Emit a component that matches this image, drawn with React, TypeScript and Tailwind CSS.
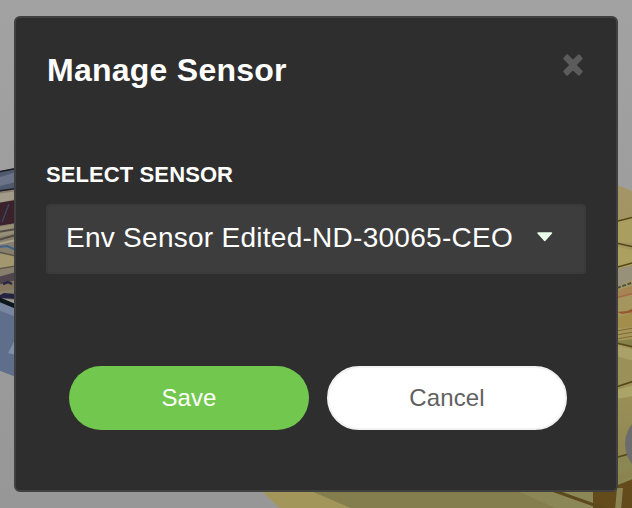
function Backdrop() {
  return (
    <svg className="absolute inset-0 h-full w-full" viewBox="0 0 632 508" aria-hidden="true">
      <defs>
        <linearGradient id="wall" x1="0" y1="0" x2="0" y2="1">
          <stop offset="0" stopColor="#a2a2a2" />
          <stop offset="1" stopColor="#979797" />
        </linearGradient>
        <linearGradient id="sofa" x1="0" y1="0" x2="0" y2="1">
          <stop offset="0" stopColor="#a39566" />
          <stop offset="0.5" stopColor="#a4965a" />
          <stop offset="1" stopColor="#857f4c" />
        </linearGradient>
        <filter id="soft" x="-10%" y="-10%" width="120%" height="120%">
          <feGaussianBlur stdDeviation="0.6" />
        </filter>
      </defs>
      <rect width="632" height="508" fill="url(#wall)" />
      <g filter="url(#soft)">
        <path d="M0 171l16-3v24l-16 2z" fill="#505a6e" />
        <path d="M0 177l16-5v10l-16 4z" fill="#6a7388" />
        <path d="M-2 172l18-3.500" stroke="#1b1b22" strokeWidth="1.500" />
        <path d="M-2 192l18-3v112l-18-4z" fill="#877f6c" />
        <path d="M-2 191l18-2.500" stroke="#20202a" strokeWidth="1.500" />
        <path d="M-2 194l18-3v8l-18 4z" fill="#a29b8a" />
        <path d="M-2 203l18-3v23l-18 3z" fill="#3a2029" />
        <path d="M2 222l7-18" stroke="#3b4660" strokeWidth="1.500" />
        <path d="M-2 227l18-3v9l-18 4z" fill="#979078" />
        <path d="M-2 232l18-3M-2 240l18-5" stroke="#554b45" strokeWidth="2" />
        <path d="M-2 244l18-4" stroke="#a9a18c" strokeWidth="2" />
        <path d="M-2 247l9-1 9 4" stroke="#3e628b" strokeWidth="2" fill="none" />
        <path d="M-2 253l18 2v12l-18 3z" fill="#a3976f" />
        <path d="M-2 252l18 4M-2 269l18-3" stroke="#5d5545" strokeWidth="1.500" />
        <path d="M-2 277l18-5v8l-18 5z" fill="#51454d" />
        <path d="M-2 285l18-4v8l-18 3z" fill="#85775f" />
        <path d="M-2 296l6-3 12 1v5l-18-1z" fill="#272442" />
        <path d="M3 284l5-2 4 2" stroke="#2c2545" strokeWidth="2.500" fill="none" />
        <path d="M-2 302l18 6v69l-18-7z" fill="#5f6e8b" />
        <path d="M-2 301l18 6v10l-18-7z" fill="#7885a0" />
        <path d="M8 353l8-15v17z" fill="#8190a9" />
        <path d="M-2 299l18 7.500" stroke="#11131a" strokeWidth="4.500" />

        <path d="M616 185q8 2 18 7v316h-18z" fill="url(#sofa)" />
        <path d="M616 222l18-5v26l-18-1z" fill="#a99d5e" />
        <path d="M616 246l18 5v15l-18 2z" fill="#aba05f" />
        <path d="M616 221.500l18-4.500M616 243l18 4M616 267.500l18-5" stroke="#574719" strokeWidth="1.600" />
        <path d="M616 269l18-4v14l-18 8z" fill="#98917a" />
        <path d="M617 288l17-6" stroke="#4d5048" strokeWidth="2" strokeDasharray="4 1.500" />
        <path d="M616 291l18-6v9l-18 4z" fill="#a48552" />
        <path d="M616 298l18-5" stroke="#a66a47" strokeWidth="1.500" />
        <path d="M617 312l10-1 7-3v4l-12 2z" fill="#96592f" />
        <path d="M616 318l18-6v15l-18 1z" fill="#a38d4c" />
        <path d="M616 331l18-3M616 335l18-3M616 339l18-3" stroke="#806a2e" strokeWidth="1" />
        <path d="M616 341l18-2v10l-18-6z" fill="#868048" />
        <path d="M616 343l18 4" stroke="#574719" strokeWidth="1.600" />
        <path d="M616 345l18 8v31l-18 9z" fill="#9b9158" />
        <path d="M616 345l18 5v11l-18-5z" fill="#aaa167" />
        <path d="M616 387l18-6" stroke="#574719" strokeWidth="1.800" />
        <path d="M616 390l18-5v11l-18 3z" fill="#aaa468" />
        <path d="M616 457l18-5v17l-18 6z" fill="#8b8752" />
        <path d="M616 457.500l18-5" stroke="#574719" strokeWidth="1.800" />
        <path d="M258 488h376v24H284z" fill="#a3965a" />
        <path d="M304 488h330v24H360z" fill="#847d4e" />
        <path d="M511 488h123v24h-70z" fill="#8c8756" />
        <path d="M593 490l23-7 18-7v36h-41z" fill="#634b1b" />
        <path d="M593 490l-2 22h-4v-22z" fill="#8c8756" />
        <path d="M616 484l18-7" stroke="#8b8752" strokeWidth="3" />
        <path d="M617 488h6l-2 22h-6z" fill="#8b8352" />
        <path d="M552 490l56 20" stroke="#5d491c" strokeWidth="3" />
      </g>
      <circle cx="657" cy="444" r="32" fill="#6c6c6c" />
    </svg>
  );
}

function CloseIcon() {
  return (
    <svg width="22" height="24" viewBox="0 0 22 24" aria-hidden="true">
      <path
        d="M5 2.400L2.400 5.600 8.700 12 2.400 18.400 5 21.600 11 16 17 21.600 19.600 18.400 13.300 12 19.600 5.600 17 2.400 11 8z"
        fill="#5c5c5c"
        stroke="#5c5c5c"
        strokeWidth="2.200"
        strokeLinejoin="round"
      />
    </svg>
  );
}

export default function App() {
  return (
    <main className="relative h-[508px] w-[632px] overflow-hidden font-['Liberation_Sans',Arial,sans-serif]">
      <Backdrop />
      <div className="relative flex h-full pt-4 pl-3.5">
        <section
          role="dialog"
          aria-label="Manage Sensor"
          className="flex h-[476px] w-[604px] flex-col rounded-md border-2 border-[#404040] bg-[#2e2e2e] px-[30px]"
        >
          <header className="mt-[34px] flex h-9 items-start justify-between">
            <h1 className="pl-px text-[32px] leading-9 font-bold tracking-[0.25px] text-white">Manage Sensor</h1>
            <button aria-label="Close" className="mr-0.5 mt-px">
              <CloseIcon />
            </button>
          </header>
          <div className="mt-[75px] flex flex-col">
            <label className="h-6 text-[22px] leading-6 font-bold tracking-[0.1px] text-white">SELECT SENSOR</label>
            <button className="mt-[17px] flex h-[70px] w-[540px] items-center rounded border-2 border-[#3a3a3a] bg-[#3d3d3d] pb-0.5 pl-[18px] text-left">
              <span className="w-[448px] text-[28px] leading-8 tracking-[0.27px] whitespace-nowrap text-white">
                Env Sensor Edited-ND-30065-CEO
              </span>
              <svg className="mb-0.5 ml-[23px] shrink-0" width="16" height="10" viewBox="0 0 16 10" aria-hidden="true">
                <path d="M1 1h13.500L7.750 8.500z" fill="#eaffea" stroke="#eaffea" strokeWidth="1.400" strokeLinejoin="round" />
              </svg>
            </button>
          </div>
          <footer className="mt-[92px] flex justify-center gap-[18px] pl-1">
            <button className="h-16 w-60 rounded-full bg-[#72c84e] text-2xl tracking-[0.1px] text-white">Save</button>
            <button className="h-16 w-60 rounded-full border-2 border-[#f2f2f2] bg-white text-2xl tracking-[0.15px] text-[#616161]">
              Cancel
            </button>
          </footer>
        </section>
      </div>
    </main>
  );
}
